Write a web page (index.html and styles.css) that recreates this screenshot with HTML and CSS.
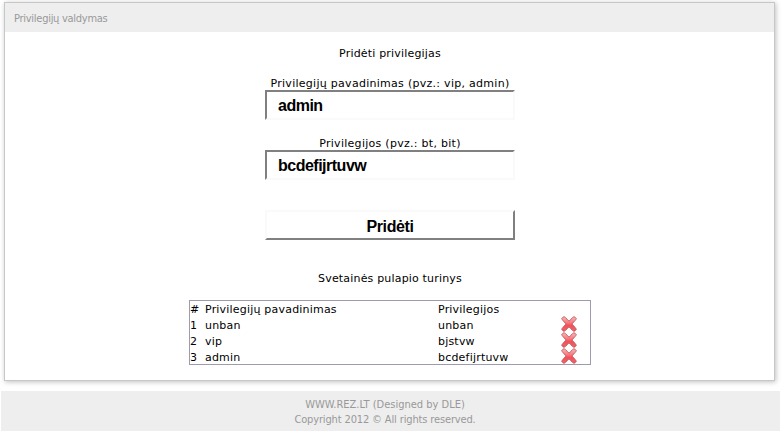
FILE: index.html
```
<!DOCTYPE html>
<html lang="lt">
<head>
<meta charset="utf-8">
<title>Privilegijų valdymas</title>
<link rel="stylesheet" href="styles.css">
</head>

<body>

<svg width="0" height="0" class="defs">
  <defs>
    <linearGradient id="red" x1="0" y1="0" x2="0" y2="1">
      <stop offset="0" stop-color="#f8b8b8"/>
      <stop offset="0.4" stop-color="#f67c80"/>
      <stop offset="0.6" stop-color="#f4505a"/>
      <stop offset="1" stop-color="#f0646a"/>
    </linearGradient>
    <symbol id="del" viewBox="0 0 16 16">
      <path d="M3 .7 Q3.9 .7 8 5.2 Q12.1 .7 13 .7 Q13.8 .7 15.3 2.6 Q15.3 3.5 10.9 8 Q15.3 12.5 15.3 13.4 Q13.8 15.3 13 15.3 Q12.1 15.3 8 10.8 Q3.9 15.3 3 15.3 Q2.2 15.3 .7 13.4 Q.7 12.5 5.1 8 Q.7 3.5 .7 2.6 Q2.2 .7 3 .7 Z" fill="url(#red)" stroke="#c0585c" stroke-width=".9" stroke-linejoin="round"/>
    </symbol>
  </defs>
</svg>

<div class="panel">
  <div class="title">Privilegijų valdymas</div>

  <div class="content">
    <p class="heading">Pridėti privilegijas</p>

    <form onsubmit="return false">
      <label for="name">Privilegijų pavadinimas (pvz.: vip, admin)</label>
      <input class="field" type="text" id="name" value="admin">
      <label for="flags">Privilegijos (pvz.: bt, bit)</label>
      <input class="field" type="text" id="flags" value="bcdefijrtuvw">
      <button class="submit" type="submit">Pridėti</button>
    </form>

    <p class="heading">Svetainės pulapio turinys</p>

    <table class="list">
      <tr class="head"><td class="num">#</td><td class="name">Privilegijų pavadinimas</td><td class="flags">Privilegijos</td><td></td></tr>
      <tr><td>1</td><td>unban</td><td>unban</td><td class="del"><svg class="icon"><use href="#del"/></svg></td></tr>
      <tr><td>2</td><td>vip</td><td>bjstvw</td><td class="del"><svg class="icon"><use href="#del"/></svg></td></tr>
      <tr><td>3</td><td>admin</td><td>bcdefijrtuvw</td><td class="del"><svg class="icon"><use href="#del"/></svg></td></tr>
    </table>
  </div>
</div>

<div class="footer">
  <div>WWW.REZ.LT (Designed by DLE)</div>
  <div class="copy">Copyright 2012 © All rights reserved.</div>
</div>

</body>
</html>
```
FILE: styles.css
```
body {
  margin: 0;
  padding-top: 2px;
  background: #fff;
  color: #000;
  font-family: Verdana, "DejaVu Sans", sans-serif;
  font-size: 11px;
  line-height: 16px;
}

.defs {
  position: absolute;
}

.panel {
  box-sizing: border-box;
  width: 771px;
  height: 379px;
  margin-left: 4px;
  border: 1px solid #c6c8c8;
  box-shadow: 1px 1px 5px rgba(0, 0, 0, 0.25);
}

.title {
  height: 29px;
  padding-left: 9px;
  background: #eee;
  color: #999;
  font-family: Tahoma, "DejaVu Sans Condensed", "DejaVu Sans", sans-serif;
  line-height: 31px;
  letter-spacing: -0.27px;
}

.content {
  padding: 14px 0 0 1px;
  text-align: center;
}

.heading {
  margin: 0;
  letter-spacing: 0.18px;
}

form {
  width: 250px;
  margin: 13px auto 31px;
}

label {
  display: block;
  height: 15px;
  line-height: 18px;
  letter-spacing: 0.28px;
  white-space: nowrap;
}

.field {
  display: block;
  box-sizing: border-box;
  width: 250px;
  height: 30px;
  margin: 0 0 15px;
  padding: 2px 11px 0;
  border: 2px solid;
  border-color: #808080 #fafafa #fafafa #808080;
  background: #fff;
  color: #000;
  font: bold 16px Arial, "Liberation Sans", sans-serif;
  letter-spacing: -0.5px;
  outline: none;
}

.submit {
  display: block;
  box-sizing: border-box;
  width: 250px;
  height: 30px;
  margin-top: 30px;
  padding: 3px 0 0;
  border: 2px solid;
  border-color: #fafafa #808080 #808080 #fafafa;
  background: #fff;
  color: #000;
  font: bold 16px Arial, "Liberation Sans", sans-serif;
  letter-spacing: -0.4px;
}

.list {
  width: 402px;
  margin: 13px auto 0;
  border: 1px solid #9c9cae;
  border-spacing: 0;
  table-layout: fixed;
  text-align: left;
  letter-spacing: 0.2px;
}

.list td {
  padding: 3px 0 0;
  line-height: 13px;
  white-space: nowrap;
}

.list .head td {
  padding-top: 2px;
}

.list .num {
  width: 15px;
}

.list .name {
  width: 233px;
}

.list .flags {
  width: 123px;
}

.list .del {
  padding: 0;
}

.icon {
  display: block;
  width: 16px;
  height: 16px;
}

.footer {
  box-sizing: border-box;
  width: 779px;
  height: 40px;
  margin: 10px 0 0 1px;
  padding: 6px 11px 0 0;
  background: #eee;
  color: #999;
  font-family: Tahoma, "DejaVu Sans Condensed", "DejaVu Sans", sans-serif;
  line-height: 15px;
  text-align: center;
}

.copy {
  letter-spacing: -0.14px;
}
```
